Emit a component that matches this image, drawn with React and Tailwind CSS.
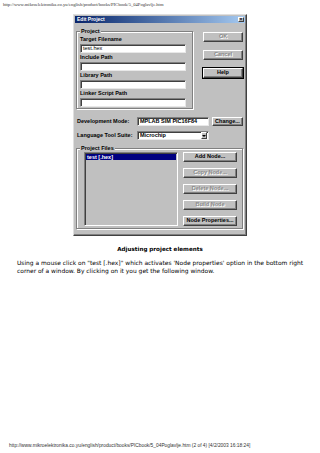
import React from 'react';

const ui = { fontFamily: '"Liberation Sans", Arial, sans-serif' };

function Btn({ children, disabled, isDefault, className = '' }) {
  return (
    <div
      className={`flex items-center justify-center bg-[#c0c0c0] border border-t-white border-l-white border-r-[#404040] border-b-[#404040] shadow-[inset_-1px_-1px_0_#808080] text-[5.5px] font-bold leading-none ${
        isDefault ? 'outline outline-1 outline-black' : ''
      } ${disabled ? 'text-[#8a8a8a] [text-shadow:1px_1px_0_#fff]' : 'text-black'} ${className}`}
    >
      {children}
    </div>
  );
}

function Field({ children, className = '' }) {
  return (
    <div
      className={`bg-white border border-t-[#808080] border-l-[#808080] border-r-[#e8e8e8] border-b-[#e8e8e8] shadow-[inset_1px_1px_0_#404040] text-[5.5px] leading-none flex items-center pl-[2px] text-black ${className}`}
    >
      {children}
    </div>
  );
}

function Group({ title, className = '', children }) {
  return (
    <div className={`relative border border-[#808080] shadow-[inset_1px_1px_0_#fff,1px_1px_0_#fff] ${className}`}>
      <span className="absolute left-[3px] top-[-4px] bg-[#c0c0c0] px-[1px] text-[5.5px] leading-[7px] font-bold">
        {title}
      </span>
      {children}
    </div>
  );
}

export default function App() {
  const paths = ['Target Filename', 'Include Path', 'Library Path', 'Linker Script Path'];

  return (
    <div className="w-[320px] h-[453px] bg-white flex flex-col overflow-hidden">
      {/* Page url */}
      <div
        className="h-[14px] pl-[3px] pt-[2px] text-[4.6px] leading-[5px] text-[#333]"
        style={{ fontFamily: '"Liberation Serif", "Times New Roman", serif' }}
      >
        http://www.mikroelektronika.co.yu/english/product/books/PICbook/5_04Poglavlje.htm
      </div>

      {/* Dialog */}
      <div
        className="ml-[73px] w-[174px] h-[222px] bg-[#c0c0c0] border border-t-[#dfdfdf] border-l-[#dfdfdf] border-r-[#404040] border-b-[#404040] shadow-[inset_-1px_-1px_0_#808080] p-[1px] text-black"
        style={ui}
      >
        <div className="h-[7px] bg-gradient-to-r from-[#0a246a] to-[#a6caf0] flex items-center justify-between pl-[2px] pr-[1px]">
          <span className="text-[5px] leading-none font-bold text-white">Edit Project</span>
          <div className="w-[6px] h-[5px] bg-[#c0c0c0] border-[0.5px] border-t-white border-l-white border-r-[#404040] border-b-[#404040] flex items-center justify-center text-[5px] leading-none font-bold">
            ×
          </div>
        </div>

        <div className="flex items-start">
          <Group title="Project" className="ml-[1px] mt-[8px] w-[117px] h-[78px]">
            <div className="pl-[3px] pt-[4px] flex flex-col gap-[1px]">
              {paths.map((p, i) => (
                <div key={p}>
                  <div className="h-[7px] text-[5.5px] leading-[7px] font-bold">{p}</div>
                  <Field className="mt-[1px] w-[106px] h-[9px]">{i === 0 ? 'test.hex' : ''}</Field>
                </div>
              ))}
            </div>
          </Group>

          <div className="ml-[10px] mt-[9px] flex flex-col gap-[8px]">
            <Btn disabled className="w-[40px] h-[10px]">OK</Btn>
            <Btn disabled className="w-[40px] h-[10px]">Cancel</Btn>
            <Btn isDefault className="w-[40px] h-[10px]">Help</Btn>
          </div>
        </div>

        <div className="mt-[8px] flex items-center">
          <div className="ml-[2px] w-[60px] text-[5.5px] leading-none font-bold">Development Mode:</div>
          <Field className="w-[72px] h-[9px] font-bold">MPLAB SIM PIC16F84</Field>
          <Btn className="ml-[3px] w-[31px] h-[9px]">Change...</Btn>
        </div>

        <div className="mt-[5px] flex items-center">
          <div className="ml-[2px] w-[60px] text-[5.5px] leading-none font-bold">Language Tool Suite:</div>
          <Field className="w-[72px] h-[9px] font-bold justify-between pr-[1px]">
            <span>Microchip</span>
            <span className="w-[6px] h-[7px] bg-[#c0c0c0] border-[0.5px] border-t-white border-l-white border-r-[#404040] border-b-[#404040] flex items-center justify-center">
              <svg width="4" height="2" viewBox="0 0 4 2">
                <path d="M0 0h4L2 2z" fill="#000" />
              </svg>
            </span>
          </Field>
        </div>

        <Group title="Project Files" className="ml-[1px] mt-[8px] w-[167px] h-[81px]">
          <div className="flex items-start pl-[7px] pt-[3px]">
            <div className="w-[94px] h-[74px] bg-[#c0c0c0] border border-t-[#808080] border-l-[#808080] border-r-white border-b-white shadow-[inset_1px_1px_0_#404040]">
              <div className="mt-[1px] mx-[1px] h-[6px] bg-[#000080] text-white text-[5.5px] leading-[6px] font-bold pl-[1px]">
                test [.hex]
              </div>
            </div>
            <div className="ml-[5px] flex flex-col gap-[6px]">
              <Btn className="w-[54px] h-[10px]">Add Node...</Btn>
              <Btn disabled className="w-[54px] h-[10px]">Copy Node...</Btn>
              <Btn disabled className="w-[54px] h-[10px]">Delete Node...</Btn>
              <Btn disabled className="w-[54px] h-[10px]">Build Node</Btn>
              <Btn className="w-[54px] h-[10px]">Node Properties...</Btn>
            </div>
          </div>
        </Group>
      </div>

      {/* Caption and text */}
      <div
        className="mt-[9px] text-center text-[5.6px] leading-[8px] font-bold text-black"
        style={{ fontFamily: '"DejaVu Sans", Verdana, sans-serif' }}
      >
        Adjusting project elements
      </div>
      <div
        className="mt-[6px] pl-[17px] text-[5.95px] leading-[7.5px] text-black whitespace-nowrap"
        style={{ fontFamily: '"DejaVu Sans", Verdana, sans-serif' }}
      >
        <div>Using a mouse click on "test [.hex]" which activates 'Node properties' option in the bottom right</div>
        <div>corner of a window. By clicking on it you get the following window.</div>
      </div>

      {/* Footer url */}
      <div
        className="mt-auto mb-[5px] pl-[9px] text-[4.85px] leading-[5px] text-[#333]"
        style={ui}
      >
        http://www.mikroelektronika.co.yu/english/product/books/PICbook/5_04Poglavlje.htm (2 of 4) [4/2/2003 16:18:24]
      </div>
    </div>
  );
}
